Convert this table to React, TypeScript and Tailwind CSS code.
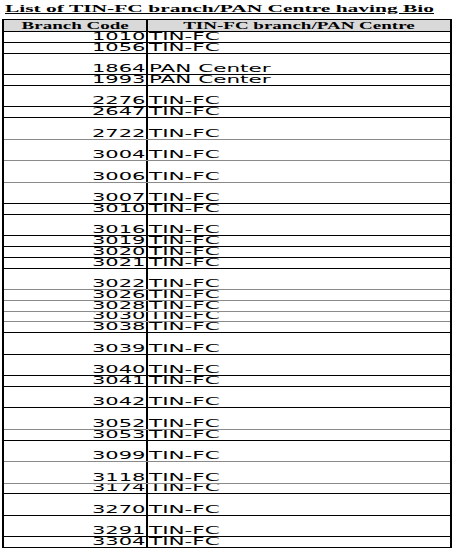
const rows: { code: string; name: string; tall: boolean; gray?: boolean }[] = [
  { code: "1010", name: "TIN-FC", tall: false },
  { code: "1056", name: "TIN-FC", tall: false },
  { code: "1864", name: "PAN Center", tall: true },
  { code: "1993", name: "PAN Center", tall: false },
  { code: "2276", name: "TIN-FC", tall: true },
  { code: "2647", name: "TIN-FC", tall: false },
  { code: "2722", name: "TIN-FC", tall: true, gray: true },
  { code: "3004", name: "TIN-FC", tall: true, gray: true },
  { code: "3006", name: "TIN-FC", tall: true, gray: true },
  { code: "3007", name: "TIN-FC", tall: true },
  { code: "3010", name: "TIN-FC", tall: false },
  { code: "3016", name: "TIN-FC", tall: true },
  { code: "3019", name: "TIN-FC", tall: false },
  { code: "3020", name: "TIN-FC", tall: false },
  { code: "3021", name: "TIN-FC", tall: false },
  { code: "3022", name: "TIN-FC", tall: true, gray: true },
  { code: "3026", name: "TIN-FC", tall: false, gray: true },
  { code: "3028", name: "TIN-FC", tall: false, gray: true },
  { code: "3030", name: "TIN-FC", tall: false, gray: true },
  { code: "3038", name: "TIN-FC", tall: false },
  { code: "3039", name: "TIN-FC", tall: true },
  { code: "3040", name: "TIN-FC", tall: true },
  { code: "3041", name: "TIN-FC", tall: false },
  { code: "3042", name: "TIN-FC", tall: true },
  { code: "3052", name: "TIN-FC", tall: true, gray: true },
  { code: "3053", name: "TIN-FC", tall: false },
  { code: "3099", name: "TIN-FC", tall: true, gray: true },
  { code: "3118", name: "TIN-FC", tall: true, gray: true },
  { code: "3174", name: "TIN-FC", tall: false },
  { code: "3270", name: "TIN-FC", tall: true },
  { code: "3291", name: "TIN-FC", tall: true },
  { code: "3304", name: "TIN-FC", tall: false },
];

export default function App() {
  return (
    <main className="h-[548px] w-[453px] overflow-hidden bg-white">
      {/* title, stretched like the pdf render */}
      <div className="flex h-[19px] items-start overflow-hidden whitespace-nowrap pl-[5px] pt-[2px] leading-none">
        <span className="inline-block origin-left scale-x-[1.95] font-['Liberation_Serif',serif] text-[11px] font-bold leading-[12px] text-black underline">
          List of TIN-FC branch/PAN Centre having Bio
        </span>
      </div>

      <div className="ml-[2px] w-[450px] border-x-2 border-t border-black font-['DejaVu_Sans',sans-serif] text-[10px] leading-none text-black">
        {/* header */}
        <div className="grid h-[12px] grid-cols-[144px_1fr] border-b border-black bg-[#d9d9d9]">
          <div className="flex items-center justify-center overflow-hidden border-r-2 border-black">
            <span className="inline-block scale-x-[1.9] font-['Liberation_Serif',serif] text-[10px] font-bold leading-none">
              Branch Code
            </span>
          </div>
          <div className="flex items-center justify-center overflow-hidden whitespace-nowrap">
            <span className="inline-block scale-x-[1.9] font-['Liberation_Serif',serif] text-[10px] font-bold leading-none">
              TIN-FC branch/PAN Centre
            </span>
          </div>
        </div>

        {rows.map((r) => (
          <Row key={r.code} {...r} />
        ))}
      </div>
    </main>
  );
}

function Row({
  code,
  name,
  tall,
  gray,
}: {
  code: string;
  name: string;
  tall: boolean;
  gray?: boolean;
}) {
  return (
    <div
      className={
        "grid grid-cols-[144px_1fr] border-b " +
        (tall ? "h-[21.5px] " : "h-[10.75px] ") +
        (gray ? "border-[#8a8a8a]" : "border-black")
      }
    >
      <div className="flex items-end justify-end overflow-hidden border-r-2 border-black pr-[1px]">
        <span className="inline-block origin-right scale-x-[2.1] whitespace-nowrap">{code}</span>
      </div>
      <div className="flex items-end overflow-hidden pl-[1px]">
        <span className="inline-block origin-left scale-x-[2.15] whitespace-nowrap">{name}</span>
      </div>
    </div>
  );
}
